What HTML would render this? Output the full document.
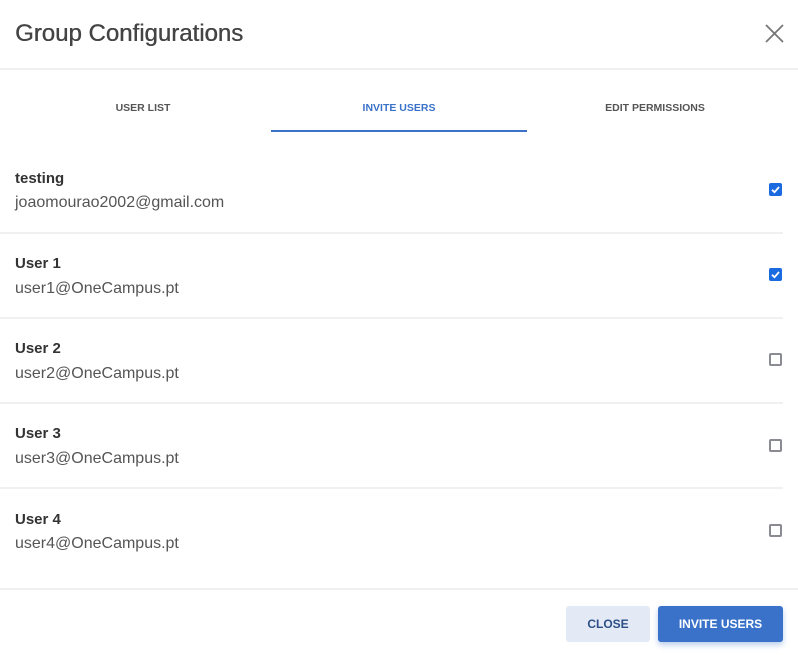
<!DOCTYPE html>
<html><head><style>
body{margin:0;width:798px;height:655px;background:#fff;font-family:"Liberation Sans",sans-serif;position:relative;overflow:hidden}
.a{position:absolute}
.title{left:15px;top:20px;font-size:24px;color:#444;text-shadow:0.4px 0 0 #444}
.tab{top:102px;font-size:10.5px;font-weight:bold;color:#555;width:256px;text-align:center}
.name{left:15px;font-size:15px;font-weight:bold;color:#333}
.mail{left:15px;font-size:16px;color:#555}
.line{left:0;width:798px;height:2px;background:#f0f0f0}
.rl{left:0;width:783px;height:2px;background:#f0f0f0}
.cb{left:769px;width:13px;height:13px;border-radius:2px;box-sizing:border-box}
.on{background:#1a6ae0}
.off{border:2px solid #8a8a92}
.btn{top:606px;height:36px;border-radius:3px;font-size:12px;font-weight:bold;text-align:center;line-height:37px}
</style></head><body>
<div class="a title">Group Configurations</div>
<svg class="a" style="left:765px;top:24px" width="19" height="19"><path d="M1 1L18 18M18 1L1 18" stroke="#777" stroke-width="1.8"/></svg>
<div class="a line" style="top:68px"></div>
<div class="a tab" style="left:15px">USER LIST</div>
<div class="a tab" style="left:271px;color:#3a72c9">INVITE USERS</div>
<div class="a tab" style="left:527px">EDIT PERMISSIONS</div>
<div class="a" style="left:271px;top:130px;width:256px;height:2px;background:#3a72c9"></div>

<div class="a name" style="top:170px">testing</div>
<div class="a mail" style="top:194px">joaomourao2002@gmail.com</div>
<div class="a cb on" style="top:183px"><svg width="13" height="13"><path d="M3 6.8L5.5 9.2L10 4" stroke="#fff" stroke-width="1.8" fill="none"/></svg></div>
<div class="a rl" style="top:232px"></div>

<div class="a name" style="top:255px">User 1</div>
<div class="a mail" style="top:280px">user1@OneCampus.pt</div>
<div class="a cb on" style="top:268px"><svg width="13" height="13"><path d="M3 6.8L5.5 9.2L10 4" stroke="#fff" stroke-width="1.8" fill="none"/></svg></div>
<div class="a rl" style="top:317px"></div>

<div class="a name" style="top:340px">User 2</div>
<div class="a mail" style="top:365px">user2@OneCampus.pt</div>
<div class="a cb off" style="top:353px"></div>
<div class="a rl" style="top:402px"></div>

<div class="a name" style="top:425px">User 3</div>
<div class="a mail" style="top:450px">user3@OneCampus.pt</div>
<div class="a cb off" style="top:439px"></div>
<div class="a rl" style="top:487px"></div>

<div class="a name" style="top:511px">User 4</div>
<div class="a mail" style="top:535px">user4@OneCampus.pt</div>
<div class="a cb off" style="top:524px"></div>

<div class="a line" style="top:588px"></div>
<div class="a btn" style="left:566px;width:84px;background:#e3eaf6;color:#2d4f86">CLOSE</div>
<div class="a btn" style="left:658px;width:125px;background:#3a72c9;color:#fff;box-shadow:0 3px 6px rgba(58,114,201,0.35)">INVITE USERS</div>
</body></html>
